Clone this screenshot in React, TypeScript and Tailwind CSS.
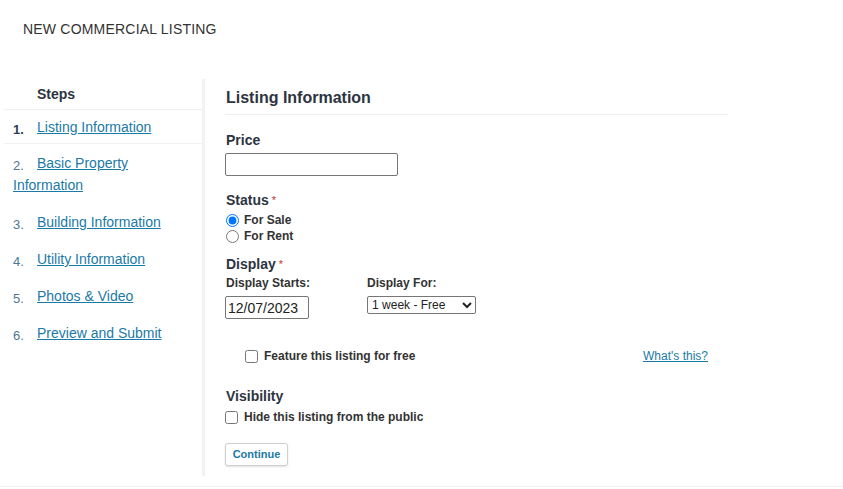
import { useState } from "react";

// step list in the sidebar
const steps = [
  "Listing Information",
  "Basic Property Information",
  "Building Information",
  "Utility Information",
  "Photos & Video",
  "Preview and Submit",
];

const Star = () => <span className="ml-[3px] align-top text-[11px] font-normal text-[#c0392b]">*</span>;

export default function App() {
  const [status, setStatus] = useState("sale");
  const [featured, setFeatured] = useState(false);
  const [hidden, setHidden] = useState(false);

  return (
    <div className="min-h-[489px] bg-white font-['Liberation_Sans',Arial,sans-serif] text-[#2d3441]">
      {/* page title */}
      <div className="pl-[23px] pt-[21px] pb-[42px] text-[14px] leading-[16px] tracking-[0.2px] text-[#333]">NEW COMMERCIAL LISTING</div>

      <div className="flex border-b border-[#efefef] pb-[10px]">
        {/* sidebar */}
        <div className="ml-[4px] w-[201px] shrink-0 border-r-[3px] border-[#f2f2f2] pb-[10px]">
          <div className="flex h-[31px] items-center border-b border-[#f0f0f0] pl-[33px] text-[14px] font-bold leading-[16px]">Steps</div>
          <ul>
            {steps.map((s, i) => (
              <li
                key={s}
                className={
                  i === 0
                    ? "flex h-[34px] items-center border-b border-[#f0f0f0] pl-[9px] text-[14px] leading-[22px]"
                    : "pl-[9px] pt-[8px] pb-[7px] pr-[10px] text-[14px] leading-[22px]"
                }
              >
                <span>
                  <span
                    className={`inline-block w-[24px] align-[-2px] text-[13px] leading-none ${
                      i === 0 ? "font-bold text-[#2d3f55]" : "text-[#4c7896]"
                    }`}
                  >
                    {i + 1}.
                  </span>
                  <a href="#" className="text-[#1b7aa6] underline">
                    {s}
                  </a>
                </span>
              </li>
            ))}
          </ul>
        </div>

        {/* main form */}
        <div className="w-[523px] pl-[20px] pt-[9px]">
          <h2 className="border-b border-[#efefef] pb-[7px] pl-[1px] text-[16px] font-bold leading-[19px]">Listing Information</h2>

          <div className="mt-[17px] pl-[1px] text-[14px] font-bold leading-[16px]">Price</div>
          <input type="text" className="mt-[5px] block h-[23px] w-[173px] rounded-[2px] border border-[#767676] px-[2px] text-[13px]" />

          <div className="mt-[16px] pl-[1px] text-[14px] font-bold leading-[16px]">
            Status
            <Star />
          </div>
          <div className="mt-[4px] text-[12px] font-bold leading-[16px] text-[#333]">
            <label className="flex h-[16px] items-center gap-[5px]">
              <input type="radio" name="status" checked={status === "sale"} onChange={() => setStatus("sale")} className="m-0 ml-[1px] h-[13px] w-[13px]" />
              For Sale
            </label>
            <label className="flex h-[16px] items-center gap-[5px]">
              <input type="radio" name="status" checked={status === "rent"} onChange={() => setStatus("rent")} className="m-0 ml-[1px] h-[13px] w-[13px]" />
              For Rent
            </label>
          </div>

          <div className="mt-[12px] pl-[1px] text-[14px] font-bold leading-[16px]">
            Display
            <Star />
          </div>
          <div className="flex gap-[57px]">
            <div>
              <div className="mt-[4px] pl-[1px] text-[12px] font-bold leading-[14px] text-[#333]">Display Starts:</div>
              <input
                type="text"
                defaultValue="12/07/2023"
                className="mt-[6px] block h-[23px] w-[84px] rounded-[2px] border border-[#767676] px-[2px] text-[14px] text-[#222]"
              />
            </div>
            <div>
              <div className="mt-[4px] text-[12px] font-bold leading-[14px] text-[#333]">Display For:</div>
              <select className="mt-[6px] block h-[18px] w-[109px] rounded-[2px] border border-[#767676] text-[12px] leading-[14px] text-[#222]">
                <option>1 week - Free</option>
                <option>2 weeks</option>
                <option>4 weeks</option>
              </select>
            </div>
          </div>

          <div className="mt-[29px] flex h-[16px] items-center justify-between pl-[20px] pr-[20px] text-[12px] leading-[16px]">
            <label className="flex items-center gap-[6px] font-bold text-[#333]">
              <input type="checkbox" checked={featured} onChange={() => setFeatured(!featured)} className="m-0 h-[13px] w-[13px]" />
              Feature this listing for free
            </label>
            <a href="#" className="text-[#1b7aa6] underline">
              What's this?
            </a>
          </div>

          <div className="mt-[24px] pl-[1px] text-[14px] font-bold leading-[16px]">Visibility</div>
          <label className="mt-[5px] flex h-[16px] items-center gap-[6px] text-[12px] font-bold text-[#333]">
            <input type="checkbox" checked={hidden} onChange={() => setHidden(!hidden)} className="m-0 h-[13px] w-[13px]" />
            Hide this listing from the public
          </label>

          <button className="mt-[18px] mb-[10px] h-[23px] w-[63px] rounded-[3px] border border-[#cfcfcf] bg-white text-[11px] font-bold text-[#1b7aa6] shadow-[0_1px_2px_rgba(0,0,0,0.12)]">
            Continue
          </button>
        </div>
      </div>
    </div>
  );
}
